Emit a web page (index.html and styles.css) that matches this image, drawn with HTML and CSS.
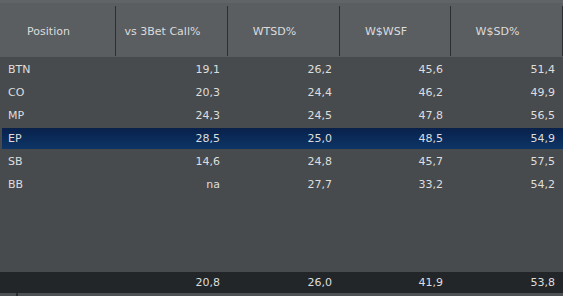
FILE: index.html
```html
<!DOCTYPE html>
<html>
<head>
<meta charset="utf-8">
<link rel="stylesheet" href="styles.css">
</head>
<body>
<div class="grid">
  <div class="head">
    <div class="hc">Position</div>
    <div class="hc">vs 3Bet Call%</div>
    <div class="hc">WTSD%</div>
    <div class="hc">W$WSF</div>
    <div class="hc">W$SD%</div>
  </div>
  <div class="body">
    <div class="row"><div class="c l">BTN</div><div class="c">19,1</div><div class="c">26,2</div><div class="c">45,6</div><div class="c">51,4</div></div>
    <div class="row"><div class="c l">CO</div><div class="c">20,3</div><div class="c">24,4</div><div class="c">46,2</div><div class="c">49,9</div></div>
    <div class="row"><div class="c l">MP</div><div class="c">24,3</div><div class="c">24,5</div><div class="c">47,8</div><div class="c">56,5</div></div>
    <div class="row sel"><div class="c l">EP</div><div class="c">28,5</div><div class="c">25,0</div><div class="c">48,5</div><div class="c">54,9</div></div>
    <div class="row"><div class="c l">SB</div><div class="c">14,6</div><div class="c">24,8</div><div class="c">45,7</div><div class="c">57,5</div></div>
    <div class="row"><div class="c l">BB</div><div class="c">na</div><div class="c">27,7</div><div class="c">33,2</div><div class="c">54,2</div></div>
  </div>
  <div class="foot">
    <div class="c l"></div><div class="c">20,8</div><div class="c">26,0</div><div class="c">41,9</div><div class="c">53,8</div>
  </div>
  <div class="scroll"><div class="sl"></div><div class="sr"></div></div>
</div>
</body>
</html>
```
FILE: styles.css
```css
html, body {
  margin: 0;
  padding: 0;
  background: #474b4e;
}
body {
  width: 563px;
  height: 296px;
  overflow: hidden;
  font-family: "DejaVu Sans", sans-serif;
  font-size: 11px;
  color: #dedede;
  -webkit-font-smoothing: none;
}
.grid {
  display: flex;
  flex-direction: column;
  height: 296px;
}
.head, .row, .foot {
  display: grid;
  grid-template-columns: 116px 112px 112px 111px 112px;
}
.head {
  background: #5a5e61;
  border-top: 3px solid #606467;
  height: 54px;
}
.hc {
  display: flex;
  align-items: center;
  justify-content: center;
  padding-right: 18px;
  margin: 3px 0 1px;
  border-right: 1px solid #2c2f32;
  color: #dcdcdc;
}
.body {
  flex: 1;
  padding-top: 1px;
  background: #474b4e;
}
.row {
  height: 23px;
  align-items: center;
}
.c {
  text-align: right;
  padding-right: 8px;
}
.c.l {
  text-align: left;
  padding-left: 8px;
}
.row .c:nth-child(2), .foot .c:nth-child(2) { padding-right: 8px; }
.row.sel {
  height: 21px;
  margin: 1px 0 1px 2px;
  background: linear-gradient(#08214b, #0d3566);
  grid-template-columns: 114px 112px 112px 111px 112px;
}
.row.sel .c.l { padding-left: 6px; }
.foot {
  height: 21px;
  align-items: center;
  background: #222629;
}
.scroll {
  height: 3px;
  display: flex;
  background: #4d5154;
}
.sl {
  width: 16px;
  border-right: 2px solid #2a2d30;
}
.sr { flex: 1; }
```
